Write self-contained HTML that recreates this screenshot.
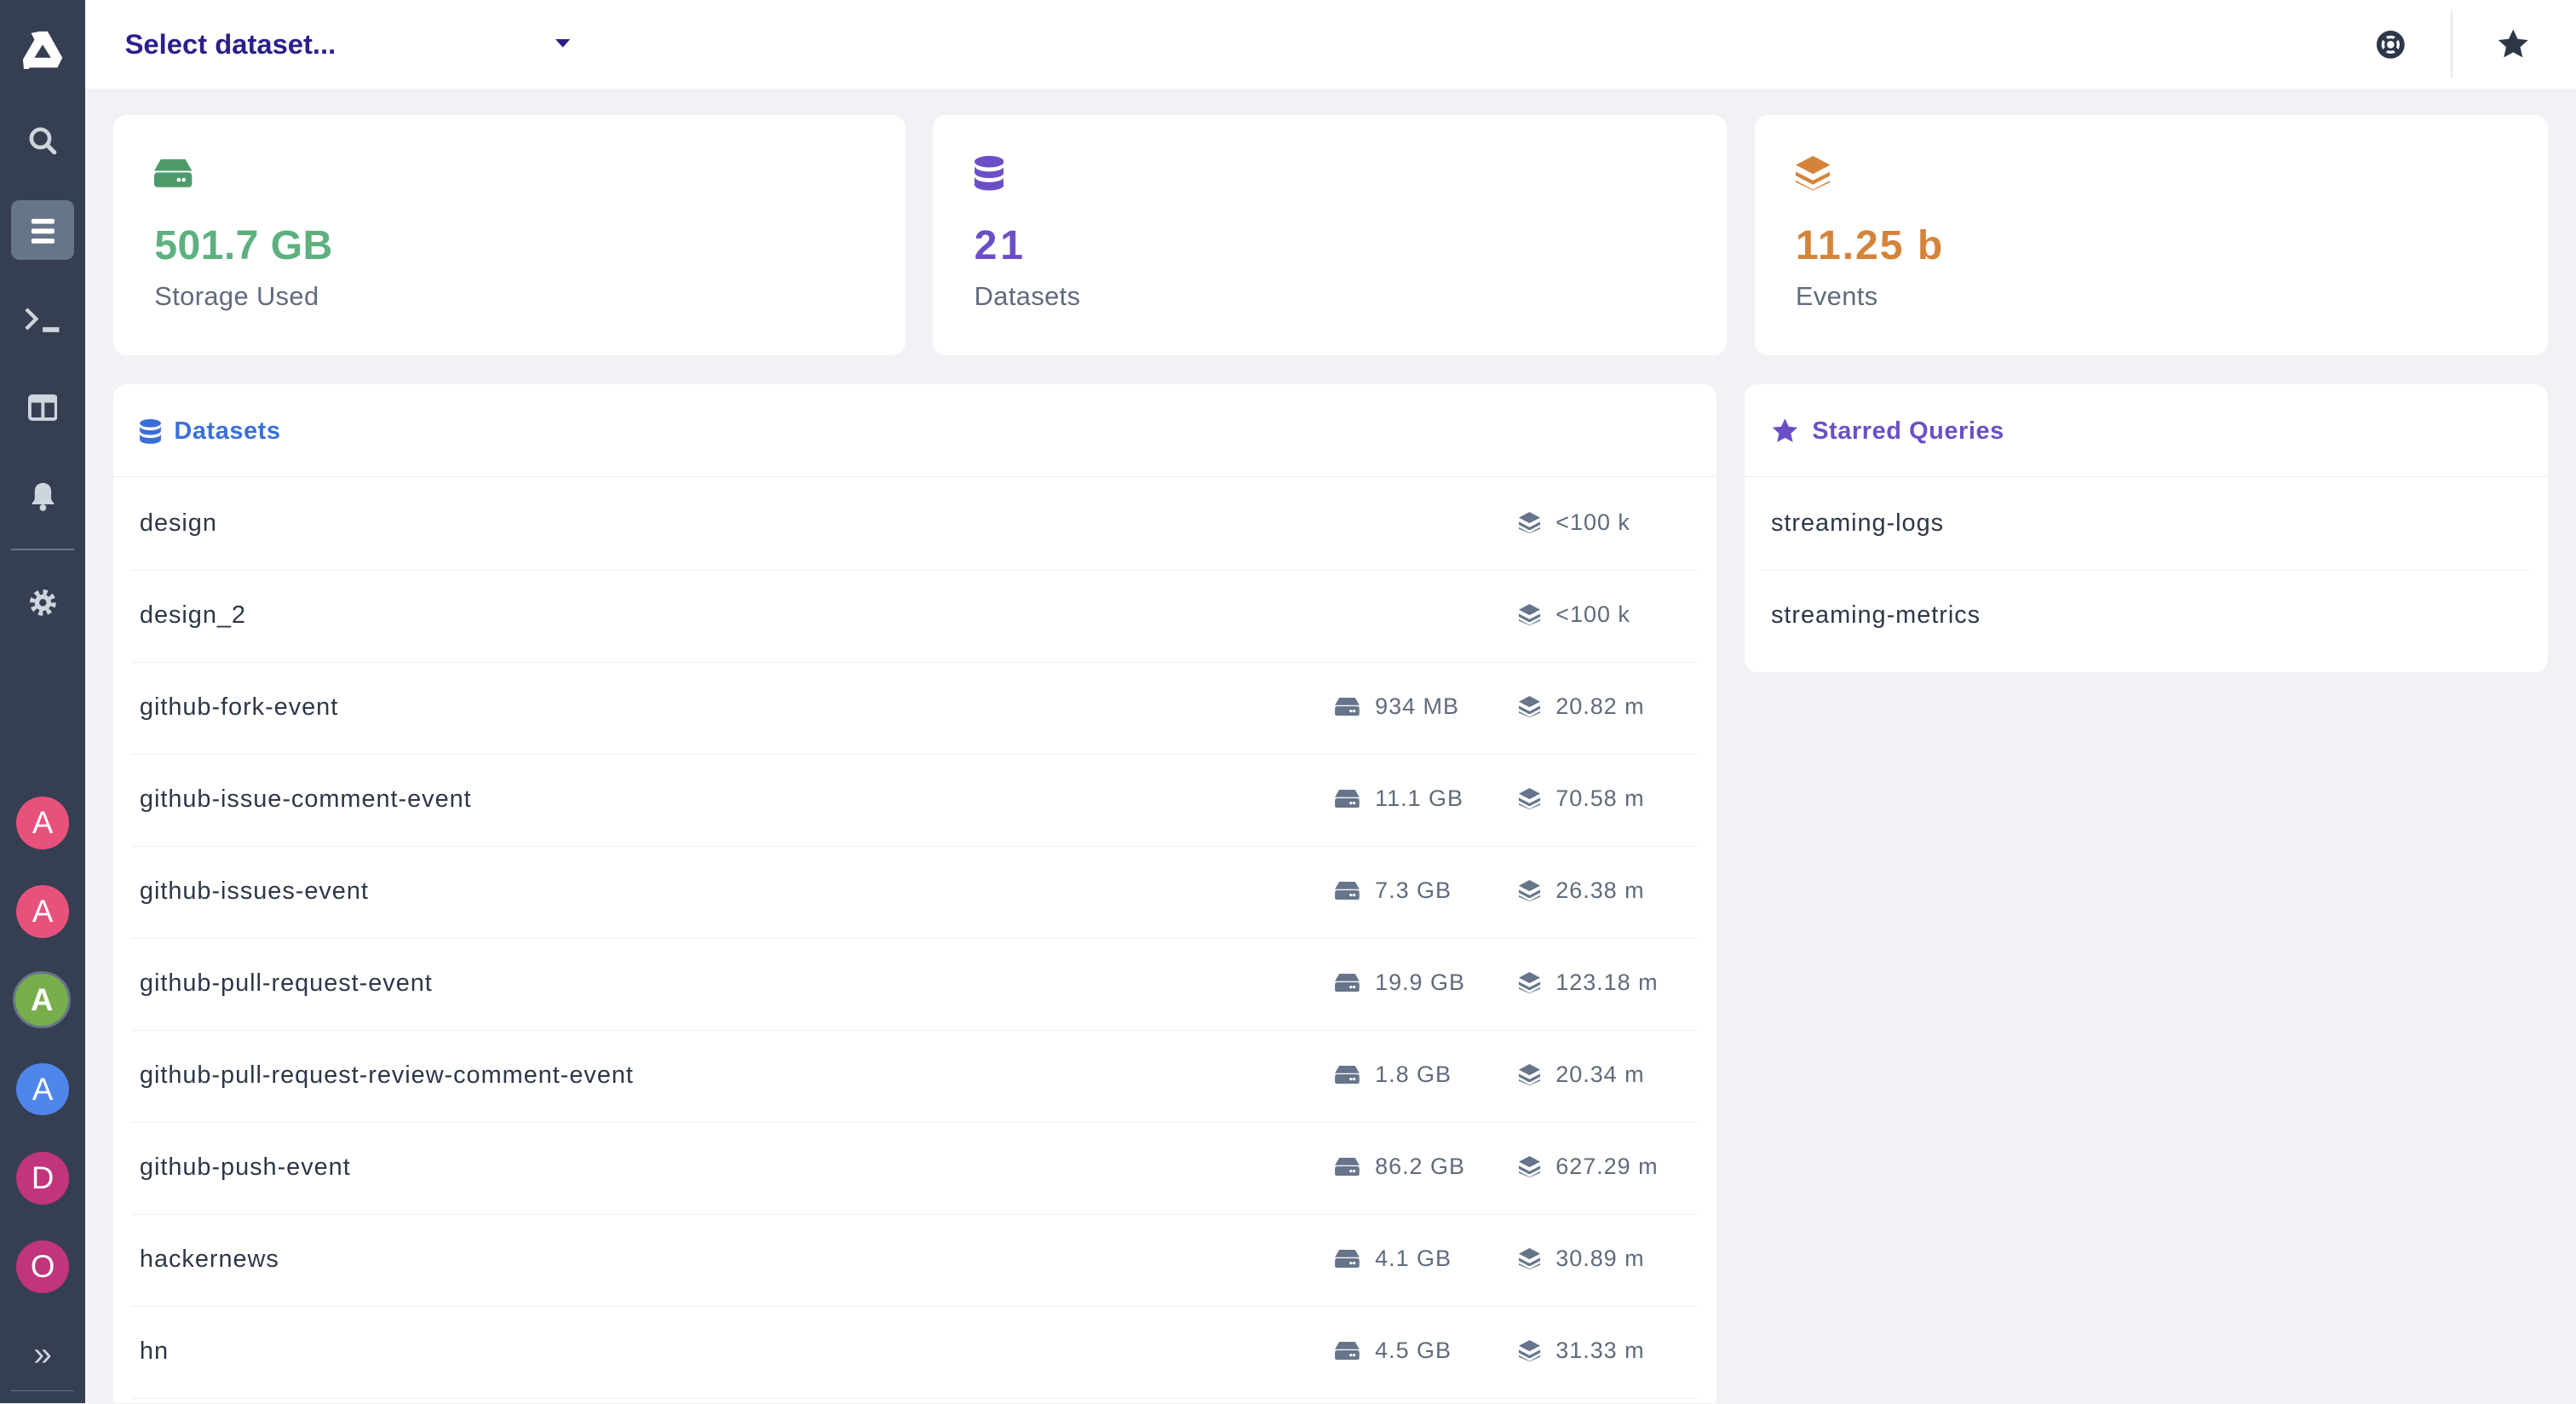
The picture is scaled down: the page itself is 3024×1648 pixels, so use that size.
<!DOCTYPE html>
<html style="overflow:hidden;background:#f0f2f5"><head><meta charset="utf-8"><style>
html,body{margin:0;padding:0;}
body{width:1568px;height:854px;overflow:hidden;zoom:1.92857;background:#f0f2f5;font-family:"Liberation Sans",sans-serif;position:relative;}
.side{position:absolute;left:0;top:0;width:52px;height:854px;background:#353f51;}
.ic{position:absolute;left:0;width:52px;display:flex;justify-content:center;align-items:center;}
.av{position:absolute;left:10px;width:32px;height:32px;border-radius:50%;color:#fff;font-size:19px;display:flex;align-items:center;justify-content:center;}
.top{position:absolute;left:52px;top:0;right:0;height:54px;background:#fff;}
.card{position:absolute;background:#fff;border-radius:8px;}
.big{position:absolute;left:25px;top:65px;font-size:25px;font-weight:bold;letter-spacing:0.2px;}
.lbl{position:absolute;left:25px;top:101px;font-size:16px;color:#5f6b7c;letter-spacing:0.2px;}
.row{position:absolute;left:11px;right:11px;height:56px;border-bottom:1px solid #eceef1;font-size:15px;color:#2d3748;letter-spacing:0.5px;}
.row .n{position:absolute;left:5px;top:19px;}
.m{position:absolute;top:19px;font-size:14px;color:#5f6b7c;display:flex;align-items:center;gap:9px;letter-spacing:0.5px;}
</style></head><body>
<div class="side">
 <div class="ic" style="top:18px"><svg width="26" height="24" viewBox="0 0 26 24"><path d="M11 1h5l9 16-3 6H5l-3 6 0 0L1 18 8 6 6 2z M13 9l-5 8h10z" fill="#fff" fill-rule="evenodd"/></svg></div>
 <div class="ic" style="top:77px"><svg width="18" height="18" viewBox="0 0 18 18"><circle cx="7.5" cy="7.5" r="5.5" stroke="#cfd5dd" stroke-width="2.4" fill="none"/><path d="M11.5 11.5l4.5 4.5" stroke="#cfd5dd" stroke-width="2.6" stroke-linecap="round"/></svg></div>
 <div style="position:absolute;left:7px;top:122px;width:38px;height:36px;background:#66758a;border-radius:5px"></div>
 <div class="ic" style="top:131px"><svg width="16" height="18"><rect x="1" y="2" width="14" height="3" rx="1" fill="#fff"/><rect x="1" y="8" width="14" height="3" rx="1" fill="#fff"/><rect x="1" y="14" width="14" height="3" rx="1" fill="#fff"/></svg></div>
 <div class="ic" style="top:186px"><svg width="24" height="18"><path d="M2 2l6 6-6 6" stroke="#cfd5dd" stroke-width="2.2" fill="none"/><rect x="12" y="13" width="10" height="3" fill="#cfd5dd"/></svg></div>
 <div class="ic" style="top:240px"><svg width="18" height="16"><rect x="1" y="1" width="16" height="14" rx="1.5" fill="none" stroke="#cfd5dd" stroke-width="2"/><rect x="1" y="1" width="16" height="4" fill="#cfd5dd"/><rect x="8" y="4" width="2" height="11" fill="#cfd5dd"/></svg></div>
 <div class="ic" style="top:293px"><svg width="16" height="18"><path d="M8 1c3 0 5 2 5 5v5l2 3H1l2-3V6c0-3 2-5 5-5z" fill="#cfd5dd"/><circle cx="8" cy="16" r="2" fill="#cfd5dd"/></svg></div>
 <div style="position:absolute;left:7px;top:334px;width:38px;height:1px;background:#66758a"></div>
 <div class="ic" style="top:358px"><svg width="18" height="18" viewBox="0 0 18 18"><circle cx="9" cy="9" r="6" fill="none" stroke="#cfd5dd" stroke-width="4" stroke-dasharray="2.4 2.3"/><circle cx="9" cy="9" r="5" fill="#cfd5dd"/><circle cx="9" cy="9" r="2.2" fill="#353f51"/></svg></div>
 <div class="av" style="top:485px;background:#e9517d">A</div>
 <div class="av" style="top:539px;background:#e9517d">A</div>
 <div class="av" style="top:591px;left:8px;width:32px;height:32px;border:2px solid #66758a;background:#77ae4c;font-weight:bold">A</div>
 <div class="av" style="top:647px;background:#4f86ec">A</div>
 <div class="av" style="top:701px;background:#c2347d">D</div>
 <div class="av" style="top:755px;background:#c2347d">O</div>
 <div class="ic" style="top:813px;color:#cfd5dd;font-size:20px">»</div>
 <div style="position:absolute;left:7px;top:846px;width:38px;height:1px;background:#66758a"></div>
</div>
<div class="top">
 <div style="position:absolute;left:24px;top:17px;font-size:17px;font-weight:bold;color:#2b1f8a">Select dataset...</div>
 <svg style="position:absolute;left:286px;top:24px" width="9" height="6"><path d="M0 0h9L4.5 5z" fill="#2b1f8a"/></svg>
 <svg style="position:absolute;left:1394px;top:18px" width="18" height="18" viewBox="0 0 18 18"><circle cx="9" cy="9" r="7" fill="none" stroke="#2d3748" stroke-width="3"/><circle cx="9" cy="9" r="3" fill="none" stroke="#2d3748" stroke-width="1.5"/><path d="M4 4l3 3M14 4l-3 3M4 14l3-3M14 14l-3-3" stroke="#2d3748" stroke-width="2.5"/></svg>
 <div style="position:absolute;left:1440px;top:7px;width:1px;height:40px;background:#e5e7eb"></div>
 <svg style="position:absolute;left:1468px;top:17px" width="20" height="19" viewBox="0 0 24 23"><path d="M12 1l3.3 7 7.7.8-5.8 5.2 1.7 7.6L12 17.8 5.1 21.6l1.7-7.6L1 8.8l7.7-.8z" fill="#2d3748"/></svg>
</div>
<div class="card" style="left:69px;top:70px;width:482px;height:146px">
 <svg style="position:absolute;left:25px;top:27px" width="23" height="17" viewBox="0 0 23 17"><path d="M4 0h15l4 7H0z" fill="#4e9a6b"/><rect x="0" y="8" width="23" height="9" rx="2" fill="#4e9a6b"/><circle cx="15" cy="12.5" r="1.2" fill="#fff"/><circle cx="18" cy="12.5" r="1.2" fill="#fff"/></svg>
 <div class="big" style="color:#5db17f">501.7 GB</div><div class="lbl">Storage Used</div></div>
<div class="card" style="left:568px;top:70px;width:483px;height:146px">
 <svg style="position:absolute;left:25px;top:25px" width="18" height="21" viewBox="0 0 18 21"><ellipse cx="9" cy="3.5" rx="9" ry="3.5" fill="#6c4fc6"/><path d="M0 6c0 2 4 3.5 9 3.5S18 8 18 6v4c0 2-4 3.5-9 3.5S0 12 0 10z M0 12.5c0 2 4 3.5 9 3.5s9-1.5 9-3.5v5c0 2-4 3.5-9 3.5S0 19.5 0 17.5z" fill="#6c4fc6"/></svg>
 <div class="big" style="color:#6c4fc6;letter-spacing:2px">21</div><div class="lbl">Datasets</div></div>
<div class="card" style="left:1068px;top:70px;width:483px;height:146px">
 <svg style="position:absolute;left:25px;top:25px" width="21" height="21" viewBox="0 0 21 21"><path d="M10.5 0L21 5.5 10.5 11 0 5.5z M0 9.5l10.5 5.5L21 9.5l0 2.5-10.5 5.5L0 12z M0 15l10.5 5.5L21 15l0 1-10.5 5L0 16z" fill="#d4843a"/></svg>
 <div class="big" style="color:#d4843a;letter-spacing:1px">11.25 b</div><div class="lbl">Events</div></div>
<div class="card" style="left:69px;top:234px;width:976px;height:620px;border-radius:8px 8px 0 0;overflow:hidden">
 <div style="position:absolute;left:0;right:0;top:0;height:56px;border-bottom:1px solid #eceef1"></div>
 <svg style="position:absolute;left:16px;top:21px" width="13" height="15" viewBox="0 0 18 21"><ellipse cx="9" cy="3.5" rx="9" ry="3.5" fill="#3a6fd8"/><path d="M0 6c0 2 4 3.5 9 3.5S18 8 18 6v4c0 2-4 3.5-9 3.5S0 12 0 10z M0 12.5c0 2 4 3.5 9 3.5s9-1.5 9-3.5v5c0 2-4 3.5-9 3.5S0 19.5 0 17.5z" fill="#3a6fd8"/></svg>
 <div style="position:absolute;left:37px;top:20px;font-size:15px;font-weight:bold;color:#3a6fd8;letter-spacing:0.3px">Datasets</div>
 <div style="position:absolute;left:0;top:57px;width:976px">
 <div class="row" style="top:0"><span class="n">design</span><span class="m" style="left:844px"><svg width="14" height="13" viewBox="0 0 21 21"><path d="M10.5 0L21 5.5 10.5 11 0 5.5z M0 9.5l10.5 5.5L21 9.5v3l-10.5 5.5L0 12.5z M0 15l10.5 5.5L21 15v1.5L10.5 21 0 16.5z" fill="#66758a"/></svg>&lt;100 k</span></div>
 <div class="row" style="top:56px"><span class="n">design_2</span><span class="m" style="left:844px"><svg width="14" height="13" viewBox="0 0 21 21"><path d="M10.5 0L21 5.5 10.5 11 0 5.5z M0 9.5l10.5 5.5L21 9.5v3l-10.5 5.5L0 12.5z M0 15l10.5 5.5L21 15v1.5L10.5 21 0 16.5z" fill="#66758a"/></svg>&lt;100 k</span></div>
 </div>
 <div id="rows" style="position:absolute;left:0;top:169px;width:976px"></div>
</div>
<div class="card" style="left:1062px;top:234px;width:489px;height:175px">
 <div style="position:absolute;left:0;right:0;top:0;height:56px;border-bottom:1px solid #eceef1"></div>
 <svg style="position:absolute;left:16px;top:20px" width="17" height="16" viewBox="0 0 24 23"><path d="M12 1l3.3 7 7.7.8-5.8 5.2 1.7 7.6L12 17.8 5.1 21.6l1.7-7.6L1 8.8l7.7-.8z" fill="#6c4fc6"/></svg>
 <div style="position:absolute;left:41px;top:20px;font-size:15px;font-weight:bold;color:#6c4fc6;letter-spacing:0.3px">Starred Queries</div>
 <div style="position:absolute;left:11px;right:11px;top:57px;height:56px;border-bottom:1px solid #eceef1"><span style="position:absolute;left:5px;top:19px;font-size:15px;color:#2d3748;letter-spacing:0.5px">streaming-logs</span></div>
 <div style="position:absolute;left:16px;top:132px;font-size:15px;color:#2d3748;letter-spacing:0.5px">streaming-metrics</div>
</div>
<script>
var d=[["github-fork-event","934 MB","20.82 m"],["github-issue-comment-event","11.1 GB","70.58 m"],["github-issues-event","7.3 GB","26.38 m"],["github-pull-request-event","19.9 GB","123.18 m"],["github-pull-request-review-comment-event","1.8 GB","20.34 m"],["github-push-event","86.2 GB","627.29 m"],["hackernews","4.1 GB","30.89 m"],["hn","4.5 GB","31.33 m"]];
var L='<svg width="14" height="13" viewBox="0 0 21 21"><path d="M10.5 0L21 5.5 10.5 11 0 5.5z M0 9.5l10.5 5.5L21 9.5v3l-10.5 5.5L0 12.5z M0 15l10.5 5.5L21 15v1.5L10.5 21 0 16.5z" fill="#66758a"/></svg>';
var H='<svg width="16" height="11" viewBox="0 0 23 17"><path d="M4 0h15l4 7H0z" fill="#66758a"/><rect x="0" y="8" width="23" height="9" rx="2" fill="#66758a"/><circle cx="15" cy="12.5" r="1.3" fill="#fff"/><circle cx="18" cy="12.5" r="1.3" fill="#fff"/></svg>';
var h='';d.forEach(function(r,i){h+='<div class="row" style="top:'+(i*56)+'px"><span class="n">'+r[0]+'</span><span class="m" style="left:732px">'+H+r[1]+'</span><span class="m" style="left:844px">'+L+r[2]+'</span></div>';});
document.getElementById('rows').innerHTML=h;
</script>
</body></html>
